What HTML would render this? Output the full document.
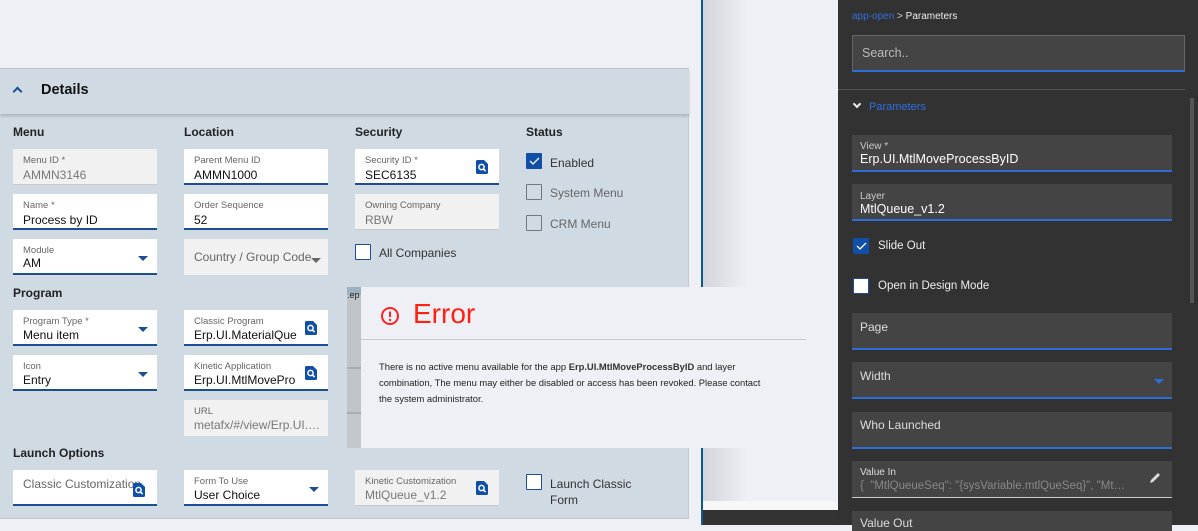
<!DOCTYPE html>
<html><head><meta charset="utf-8"><style>
*{margin:0;padding:0;box-sizing:border-box}
body{width:1198px;height:525px;overflow:hidden;background:#eff0f5;font-family:"Liberation Sans",sans-serif;position:relative}
.a{position:absolute}
.panel{left:0;top:68px;width:689px;height:451px;background:#d0dae3;border:1px solid #c4c8cc;border-left:none}
.hdr{left:0;top:68px;width:689px;height:46px;background:#d0dae3;border-top:1px solid #c2c6ca;box-shadow:0 2px 3px rgba(0,0,0,.18)}
.h{font-size:12px;font-weight:bold;color:#222}
.f{position:absolute;width:144px;height:36px;background:#fff;border-bottom:2px solid #1e4e92}
.f.d{background:#f1f1f1;border-bottom:1px solid #c9c9c9}
.f .l{position:absolute;left:10px;top:6px;font-size:9.5px;color:#666;white-space:nowrap}
.f .v{position:absolute;left:10px;top:19px;font-size:12px;color:#111;white-space:nowrap;overflow:hidden;max-width:114px}
.f.d .v{color:#777}
.f .p{position:absolute;left:10px;top:11px;font-size:12px;color:#666;white-space:nowrap}
.dd{position:absolute;right:9px;top:17px;width:0;height:0;border-left:5px solid transparent;border-right:5px solid transparent;border-top:5px solid #1e4e92}
.si{position:absolute;right:11px;top:11px;width:12px;height:14px}
.cb{position:absolute;width:16px;height:16px;border:1.5px solid #1e4e92;background:#fff;border-radius:1px}
.cb.g{border-color:#777;background:transparent}
.cb.on{background:#0f4fa8;border-color:#0f4fa8}
.ct{position:absolute;font-size:12px;color:#333;white-space:nowrap}
.ct.g{color:#666}
.df{position:absolute;left:852px;width:320px;background:#444;border-bottom:2px solid #2b6fd6}
.df .l{position:absolute;left:8px;font-size:12px;color:#ddd}
</style></head><body>
<svg width="0" height="0" style="position:absolute"><symbol id="s" viewBox="0 0 12 14"><path d="M0 1.5Q0 0 1.5 0H8L12 4V12.5Q12 14 10.5 14H1.5Q0 14 0 12.5Z" fill="#0f4fa8"/><circle cx="5.5" cy="7" r="2.6" stroke="#fff" stroke-width="1.5" fill="none"/><path d="M7.4 8.9L9.6 11.1" stroke="#fff" stroke-width="1.6"/></symbol></svg>
<div class="a panel"></div>
<div class="a hdr"></div>
<div class="a" style="left:14px;top:88px;width:7px;height:7px;border-left:2px solid #1e4e92;border-top:2px solid #1e4e92;transform:rotate(45deg)"></div>
<div class="a" style="left:41px;top:82px;font-size:14.5px;font-weight:bold;color:#111">Details</div>

<div class="a h" style="left:13px;top:125px">Menu</div>
<div class="a h" style="left:184px;top:125px">Location</div>
<div class="a h" style="left:355px;top:125px">Security</div>
<div class="a h" style="left:526px;top:125px">Status</div>

<div class="f d" style="left:13px;top:149px"><div class="l">Menu ID *</div><div class="v">AMMN3146</div></div>
<div class="f" style="left:13px;top:194px"><div class="l">Name *</div><div class="v">Process by ID</div></div>
<div class="f" style="left:13px;top:239px"><div class="l">Module</div><div class="v" style="top:17px">AM</div><div class="dd"></div></div>

<div class="f" style="left:184px;top:149px"><div class="l">Parent Menu ID</div><div class="v">AMMN1000</div></div>
<div class="f" style="left:184px;top:194px"><div class="l">Order Sequence</div><div class="v">52</div></div>
<div class="f d" style="left:184px;top:239px;border-bottom:none"><div class="p">Country / Group Code</div><div class="dd" style="border-top-color:#666;right:7px;top:19px"></div></div>

<div class="f" style="left:355px;top:149px"><div class="l">Security ID *</div><div class="v">SEC6135</div><svg class="si"><use href="#s"/></svg></div>
<div class="f d" style="left:355px;top:194px"><div class="l">Owning Company</div><div class="v">RBW</div></div>
<div class="cb" style="left:355px;top:244px"></div><div class="ct" style="left:379px;top:246px">All Companies</div>

<div class="cb on" style="left:526px;top:153px"><svg width="14" height="14" style="position:absolute;left:0;top:0"><path d="M3 7l3 3 6-6" stroke="#fff" stroke-width="1.3" fill="none"/></svg></div><div class="ct" style="left:550px;top:156px">Enabled</div>
<div class="cb g" style="left:526px;top:184px"></div><div class="ct g" style="left:550px;top:186px">System Menu</div>
<div class="cb g" style="left:526px;top:215px"></div><div class="ct g" style="left:550px;top:217px">CRM Menu</div>

<div class="a h" style="left:13px;top:286px">Program</div>
<div class="f" style="left:13px;top:310px"><div class="l">Program Type *</div><div class="v" style="top:18px">Menu item</div><div class="dd"></div></div>
<div class="f" style="left:13px;top:355px"><div class="l">Icon</div><div class="v" style="top:18px">Entry</div><div class="dd"></div></div>
<div class="f" style="left:184px;top:310px"><div class="l">Classic Program</div><div class="v" style="top:18px;max-width:104px">Erp.UI.MaterialQue</div><svg class="si"><use href="#s"/></svg></div>
<div class="f" style="left:184px;top:355px"><div class="l">Kinetic Application</div><div class="v" style="top:18px;max-width:104px">Erp.UI.MtlMovePro</div><svg class="si"><use href="#s"/></svg></div>
<div class="f d" style="left:184px;top:400px;border-bottom:none"><div class="l">URL</div><div class="v" style="top:18px;max-width:130px">metafx/#/view/Erp.UI.…</div></div>

<div class="a h" style="left:13px;top:446px">Launch Options</div>
<div class="f" style="left:13px;top:470px"><div class="p" style="top:7px">Classic Customization</div><svg class="si" style="right:12px;top:13px"><use href="#s"/></svg></div>
<div class="f" style="left:184px;top:470px"><div class="l">Form To Use</div><div class="v" style="top:18px">User Choice</div><div class="dd"></div></div>
<div class="f d" style="left:355px;top:470px"><div class="l">Kinetic Customization</div><div class="v" style="top:18px">MtlQueue_v1.2</div><svg class="si"><use href="#s"/></svg></div>
<div class="cb" style="left:526px;top:474px"></div><div class="ct" style="left:550px;top:476px;line-height:16px">Launch Classic<br>Form</div>

<!-- middle area -->
<div class="a" style="left:701px;top:0;width:2px;height:525px;background:#0d5a8a"></div>
<div class="a" style="left:703px;top:0;width:135px;height:510px;background:linear-gradient(90deg,#d4d5da,#eef0f5 45px,#eff0f5)"></div>
<div class="a" style="left:703px;top:501px;width:135px;height:9px;background:#f7f7f7"></div>
<div class="a" style="left:703px;top:510px;width:135px;height:15px;background:#333"></div>

<!-- error dialog -->
<div class="a" style="left:347px;top:287px;width:14px;height:161px;background:linear-gradient(#9fb0c0 0 8px,#bfc4c9 8px 80px,#a8adb2 80px 82px,#c0c5ca 82px 125px,#a8adb2 125px 127px,#c3c8cd 127px)"></div>
<div class="a" style="left:347px;top:290px;font-size:9px;color:#222">.ep</div>
<div class="a" style="left:361px;top:287px;width:477px;height:161px;background:#eff0f5"></div>
<div class="a" style="left:361px;top:339px;width:445px;height:1px;background:#c8cad0"></div>
<svg class="a" style="left:380px;top:306px" width="20" height="20"><circle cx="10" cy="10" r="8" stroke="#f22" stroke-width="2" fill="none"/><path d="M10 5.5v5.5" stroke="#f22" stroke-width="2"/><circle cx="10" cy="14" r="1.2" fill="#f22"/></svg>
<div class="a" style="left:413px;top:298px;font-size:28px;color:#ff2010">Error</div>
<div class="a" style="left:379px;top:359px;width:405px;font-size:9.4px;line-height:16px;color:#222">There is no active menu available for the app <b style="font-weight:600;color:#333">Erp.UI.MtlMoveProcessByID</b> and layer<br>combination, The menu may either be disabled or access has been revoked. Please contact<br>the system administrator.</div>

<!-- right dark panel -->
<div class="a" style="left:838px;top:0;width:360px;height:525px;background:#323232"></div>
<div class="a" style="left:1190px;top:98px;width:4px;height:205px;background:#555"></div>
<div class="a" style="left:852px;top:11px;font-size:10px;color:#2f6fe0">app-open <span style="color:#ccc">&gt;</span> <span style="color:#eee">Parameters</span></div>
<div class="a" style="left:852px;top:35px;width:333px;height:37px;background:#444;border:1px solid #666;border-bottom:2px solid #2b6fd6"></div>
<div class="a" style="left:862px;top:46px;font-size:12.5px;color:#bbb">Search..</div>
<div class="a" style="left:838px;top:89px;width:347px;height:1px;background:#555"></div>
<div class="a" style="left:854px;top:101px;width:6px;height:6px;border-right:2px solid #eee;border-bottom:2px solid #eee;transform:rotate(45deg)"></div>
<div class="a" style="left:869px;top:101px;font-size:11px;color:#2f6fe0">Parameters</div>

<div class="df" style="top:135px;height:37px"><div class="l" style="top:6px;font-size:10px;color:#ccc">View *</div><div class="l" style="top:17px;font-size:12.5px;color:#fff">Erp.UI.MtlMoveProcessByID</div></div>
<div class="df" style="top:184px;height:37px"><div class="l" style="top:7px;font-size:10px;color:#ccc">Layer</div><div class="l" style="top:18px;font-size:12.5px;color:#fff">MtlQueue_v1.2</div></div>
<div class="cb on" style="left:853px;top:238px"><svg width="14" height="14" style="position:absolute;left:0;top:0"><path d="M3 7l3 3 6-6" stroke="#fff" stroke-width="1.3" fill="none"/></svg></div>
<div class="ct" style="left:878px;top:240px;color:#eee;font-size:11.5px">Slide Out</div>
<div class="cb" style="left:853px;top:278px"></div>
<div class="ct" style="left:878px;top:280px;color:#eee;font-size:11.5px">Open in Design Mode</div>

<div class="df" style="top:313px;height:37px"><div class="l" style="top:7px">Page</div></div>
<div class="df" style="top:362px;height:37px"><div class="l" style="top:7px">Width</div><div class="dd" style="right:8px;top:17px;border-top-color:#2b6fd6"></div></div>
<div class="df" style="top:412px;height:37px"><div class="l" style="top:6px">Who Launched</div></div>
<div class="df" style="top:461px;height:37px;border-bottom:1px solid #ccc"><div class="l" style="top:6px;font-size:10px;color:#ddd">Value In</div><div class="l" style="top:19px;font-size:11.5px;color:#888;white-space:nowrap">{ &nbsp;"MtlQueueSeq": "{sysVariable.mtlQueSeq}", "Mt…</div>
<svg style="position:absolute;right:10px;top:10px" width="14" height="14"><path d="M2 12l1-3 7-7 2 2-7 7z" fill="#ddd"/></svg></div>
<div class="df" style="top:511px;height:20px;border:none"><div class="l" style="top:5px">Value Out</div></div>
</body></html>
